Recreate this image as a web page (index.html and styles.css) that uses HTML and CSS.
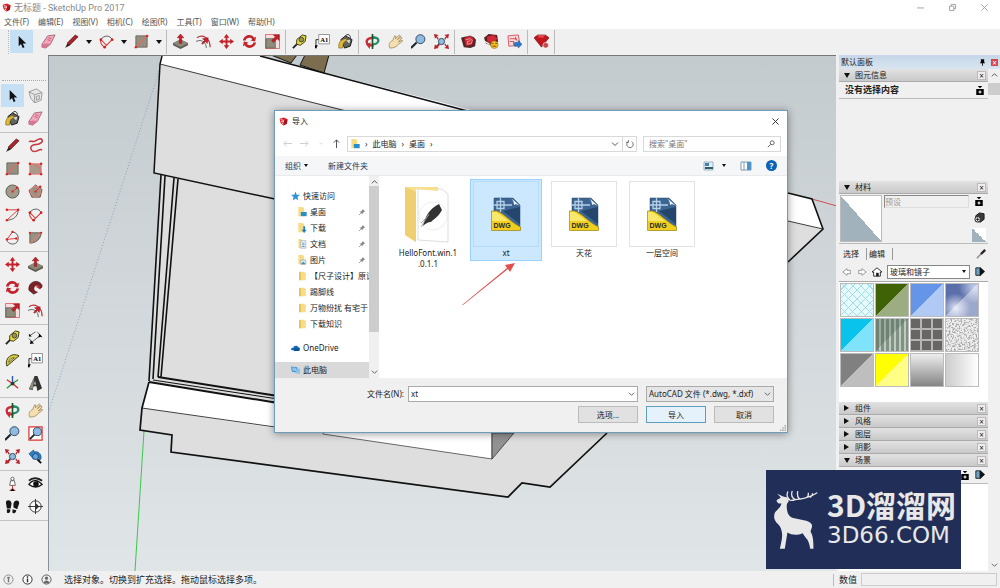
FILE: index.html
```html
<!DOCTYPE html>
<html lang="zh-Hans">
<head>
  <meta charset="UTF-8">
  <meta name="viewport" content="width=device-width, initial-scale=1.0">
  <title>无标题 - SketchUp Pro 2017</title>
  <link rel="stylesheet" href="styles.css">
</head>
<body>
  <!-- icon sprite -->
  <svg class="sprite" aria-hidden="true">
    <symbol id="i-app" viewBox="0 0 16 16"><path fill="#d8232a" d="M1 3l8-2 6 3-1 8-6 3-5-4z"/><path fill="#a3131b" d="M9 6l6-2-1 8-6 3z"/><path fill="none" stroke="#fff" stroke-width="1.3" d="M3 4.500l5 1.500v3L4 8M5 11l3 1.500"/></symbol>
    <symbol id="i-select" viewBox="0 0 16 16"><path fill="#111" d="M5 2v11l2.500-2.300L9.200 15l2-.9-1.800-4H13z"/></symbol>
    <symbol id="i-eraser" viewBox="0 0 16 16"><path fill="#f4a6bb" stroke="#8c5566" stroke-width=".8" d="M1 11L7 2l8-1-5 10-5 4-4-1z"/><path fill="#d97793" d="M1 11l5-1 4 1-5 4-4-1z"/><path stroke="#c43d62" stroke-width=".8" d="M8 4l3 1M7 6l3 1"/></symbol>
    <symbol id="i-pencil" viewBox="0 0 16 16"><path fill="#a8252b" stroke="#541012" stroke-width=".7" d="M12 1l3 2-9 9-3 1 1-4z"/><path fill="#222" d="M4 10l2 2-5 3z"/></symbol>
    <symbol id="i-arc" viewBox="0 0 16 16"><path fill="none" stroke="#555" d="M2 6C5 1 12 1 14 6"/><path fill="none" stroke="#d33" stroke-width="1.100" d="M2 6c-1 3 1 7 4 8l8-8M2 6l6 6"/><g fill="#c22"><circle cx="2" cy="6" r="1.400"/><circle cx="14" cy="6" r="1.400"/><circle cx="6" cy="14" r="1.400"/></g></symbol>
    <symbol id="i-rect" viewBox="0 0 16 16"><path fill="#948f7f" stroke="#6d6a5e" d="M2 2h12v12H2z"/><path stroke="#e66" stroke-width="1.200" d="M2 14L14 2"/><g fill="#d22"><circle cx="2" cy="14" r="1.300"/><circle cx="14" cy="2" r="1.300"/></g></symbol>
    <symbol id="i-rrect" viewBox="0 0 16 16"><path fill="#a8998a" stroke="#d77" d="M2 3h12v11H2z"/><path fill="none" stroke="#e66" d="M2 3c6 0 12 4 12 11"/><g fill="#d22"><circle cx="2" cy="3" r="1.300"/><circle cx="14" cy="3" r="1.300"/><circle cx="2" cy="14" r="1.300"/><circle cx="14" cy="14" r="1.300"/></g></symbol>
    <symbol id="i-circle" viewBox="0 0 16 16"><circle cx="8" cy="8" r="7" fill="#a09c8b" stroke="#5d5b50"/><path stroke="#d33" d="M8 8l5-4"/><g fill="#d22"><circle cx="8" cy="8" r="1.200"/><circle cx="13" cy="4" r="1.300"/></g></symbol>
    <symbol id="i-poly" viewBox="0 0 16 16"><path fill="#a09080" stroke="#6b5a50" d="M8 1l7 5-2 8H4L1 7z"/><circle cx="8" cy="8" r="5.500" fill="none" stroke="#d88"/><path stroke="#d33" d="M8 8l5-5"/><g fill="#d22"><circle cx="8" cy="8" r="1.200"/><circle cx="13" cy="3" r="1.300"/></g></symbol>
    <symbol id="i-free" viewBox="0 0 16 16"><path fill="none" stroke="#c3363e" stroke-width="1.600" d="M1 4c2-2 4 1 7-1s6-3 7-1-2 5-6 5-6 1-6 4 3 4 6 3 4-3 6-1"/></symbol>
    <symbol id="i-arc2" viewBox="0 0 16 16"><path fill="none" stroke="#d33" d="M1 3h13L2 14"/><path fill="none" stroke="#555" d="M14 3c0 7-5 11-12 11"/><g fill="#d22"><circle cx="2" cy="3" r="1.300"/><circle cx="14" cy="3" r="1.300"/><circle cx="2" cy="14" r="1.300"/></g></symbol>
    <symbol id="i-arc3" viewBox="0 0 16 16"><path fill="none" stroke="#555" d="M8 2c8 1 8 12 1 13-4 0-7-2-7-5"/><path fill="none" stroke="#d33" d="M8 2L2 10l10-1"/><g fill="#d22"><circle cx="8" cy="2" r="1.300"/><circle cx="2" cy="10" r="1.300"/><circle cx="12" cy="9" r="1.300"/></g></symbol>
    <symbol id="i-pie" viewBox="0 0 16 16"><path fill="#9a9382" stroke="#6d5b52" d="M2 3h12c0 6-5 11-12 11z"/><path fill="none" stroke="#e77" d="M2 14L14 3"/><g fill="#d22"><circle cx="2" cy="3" r="1.200"/><circle cx="14" cy="3" r="1.200"/></g></symbol>
    <symbol id="i-push" viewBox="0 0 16 16"><path fill="#8d8a79" stroke="#4c4b42" stroke-width=".6" d="M0 10l8-4 8 4-8 4z"/><path fill="#5c5a4e" d="M0 10l8 4 8-4v2l-8 4-8-4z"/><path fill="#c8202a" stroke="#7b1016" stroke-width=".5" d="M8 0l3.500 4H9.200v6H6.800V4H4.500z"/></symbol>
    <symbol id="i-offset" viewBox="0 0 16 16"><path fill="none" stroke="#c2303a" stroke-width="1.300" d="M1 4c6-4 14 0 14 10"/><path fill="none" stroke="#666" d="M0 8c6-3 11 1 11 7"/><path fill="#c8202a" stroke="#7b1016" stroke-width=".5" d="M6 10l3-3-2-2 6-1-1 6-2-2-3 3z"/></symbol>
    <symbol id="i-move" viewBox="0 0 16 16"><path fill="#c3222b" d="M8 0l3 4H9v3h3V5l4 3-4 3V9H9v3h2l-3 4-3-4h2V9H4v2L0 8l4-3v2h3V4H5z"/></symbol>
    <symbol id="i-rotate" viewBox="0 0 16 16"><path fill="#c3222b" d="M1 7c1-6 9-8 12-3l2-1-1 5-5-1 2-1.500C9 3 4 4 4 7zM15 9c-1 6-9 8-12 3l-2 1 1-5 5 1-2 1.500c2 2.500 7 1.500 7-1.500z"/></symbol>
    <symbol id="i-scale" viewBox="0 0 16 16"><path fill="#f7dede" stroke="#d33" stroke-width=".7" d="M.500.500h15v15H.500z"/><path fill="#8f8c7c" stroke="#55534a" stroke-width=".7" d="M1 5h10v10H1z"/><path fill="#c8202a" stroke="#7b1016" stroke-width=".5" d="M7 7l4-4-2-2h6v6l-2-2-4 4z"/></symbol>
    <symbol id="i-follow" viewBox="0 0 16 16"><path fill="#7d2226" stroke="#3c1113" stroke-width=".7" d="M1 11C0 4 6 0 11 2s5 6 2 7c0-3-4-5-6-2s0 5 3 6l-4 2z"/><path fill="#c8202a" d="M8 7l5-1v4z"/></symbol>
    <symbol id="i-tape" viewBox="0 0 16 16"><path stroke="#222" stroke-width="2" d="M1 15l5-5"/><path fill="#e3d742" stroke="#3b3a12" d="M5 6l6-5 4 1-1 6-5 4-4-1z"/><circle cx="10" cy="6" r="2.500" fill="#9c9740" stroke="#444"/></symbol>
    <symbol id="i-text" viewBox="0 0 16 16"><path fill="none" stroke="#222" d="M5 6H1v8"/><path d="M-1 12h4l-2 4z"/><path fill="#fff" stroke="#777" stroke-width=".8" d="M4 .500h11.500v10H4z"/><text x="5.500" y="8.500" class="svg-a1">A1</text></symbol>
    <symbol id="i-paint" viewBox="0 0 16 16"><path fill="#64645e" stroke="#111" d="M3 6l5-4 7 4-2 7-6 2z"/><path fill="none" stroke="#222" d="M8 2c2-3 6-1 5 3"/><path fill="#dfb934" stroke="#6b5613" stroke-width=".6" d="M1 15c-1-5 1-9 7-10l3 2c-5 0-6 4-6 8z"/><path fill="#ddd" d="M9 7l4-1-1 4z"/></symbol>
    <symbol id="i-orbit" viewBox="0 0 16 16"><path fill="none" stroke="#cc2a35" stroke-width="2.500" d="M9 12c-5 1-8-2-7-5s5-3 8-3"/><path fill="none" stroke="#288a6b" stroke-width="2.500" d="M7 4c5-1 8 1 7 4s-4 3-7 3"/><path stroke="#152" stroke-width="1.700" d="M8 0v16"/><path fill="#cc2a35" d="M6 9l-1 7-4-5z"/></symbol>
    <symbol id="i-hand" viewBox="0 0 16 16"><path fill="#f5dfb0" stroke="#8d7444" stroke-width=".7" d="M2 15c-2-4 0-7 3-8l2-5 1.500.500L8 5l4-4 1.300 1L10 6l4-3 1 1.200-4 4.300 4-2 .500 1.300L11 11c-2 3-5 4-9 4z"/></symbol>
    <symbol id="i-zoom" viewBox="0 0 16 16"><path stroke="#1c2430" stroke-width="2.200" d="M0 15l6-6"/><circle cx="10" cy="5.500" r="4.800" fill="#8fbbe0" stroke="#33465c"/></symbol>
    <symbol id="i-zoomwin" viewBox="0 0 16 16"><path fill="#fff" stroke="#d33" stroke-width="1.300" d="M1 1h14v14H1z"/><path stroke="#1c2430" stroke-width="2" d="M2 14l5-5"/><circle cx="10" cy="6" r="4.300" fill="#8fbbe0" stroke="#33465c"/></symbol>
    <symbol id="i-extents" viewBox="0 0 16 16"><path stroke="#223" stroke-width="1.500" d="M2 14l4-4"/><path fill="#b9202a" d="M0 0l5 1-2 1.500 2 2L4 6 2.500 3.500 1 5zM16 0l-5 1 2 1.500-2 2L12 6l1.500-2.500L15 5zM16 16l-5-1 2-1.500-2-2 1-1.500 1.500 2.500L15 11zM0 16l1-5 1.500 1.500L5 11l1 1-2 2 1 1z"/><circle cx="8" cy="8" r="3.300" fill="#8fbbe0" stroke="#33465c"/></symbol>
    <symbol id="i-prev" viewBox="0 0 16 16"><path fill="#2f7fc0" stroke="#174a7c" stroke-width=".7" d="M1 5l5-4v2c5-1 8 2 8 6 0 2-1 3-2 3 0-3-2-5-6-4v3z"/><circle cx="8" cy="8" r="3.200" fill="#5fa4d8" stroke="#174a7c"/><path stroke="#111" stroke-width="2" d="M10 11l4 4"/></symbol>
    <symbol id="i-dims" viewBox="0 0 16 16"><path fill="none" stroke="#333" stroke-width=".8" d="M4 13L13 6M1 9l5 6M10 2l5 6M2 6l6-4"/><path d="M3 11l3 3-4 1zM12 4l3 3-4 1zM1 4l3 3H1z"/></symbol>
    <symbol id="i-protractor" viewBox="0 0 16 16"><path fill="#d8c943" stroke="#3b3a12" d="M2 14C-1 5 8-1 15 3z"/><path fill="#f2f2f2" stroke="#3b3a12" stroke-width=".7" d="M4 10c0-3 3-5 6-5z"/></symbol>
    <symbol id="i-axes" viewBox="0 0 16 16"><path stroke="#2a5cc4" stroke-width="1.500" d="M8 0v8"/><path stroke="#c33" stroke-width="1.500" d="M8 8l-6-4M8 8l6 5"/><path stroke="#2a9a3c" stroke-width="1.500" d="M8 8l6-4M8 8l-6 5"/><circle cx="8" cy="8" r="2" fill="#334"/></symbol>
    <symbol id="i-3dtext" viewBox="0 0 16 16"><path fill="#333" d="M7 0l3 0 5 13-5 3-1-5H6l-1 4-4-1z"/><path fill="#8d8a79" d="M7 1L5 14l-4-1z"/><path fill="#ddd" d="M7.500 5l1 4h-2z"/></symbol>
    <symbol id="i-position" viewBox="0 0 16 16"><circle cx="8" cy="3" r="1.700" fill="#fff" stroke="#444" stroke-width=".8"/><path fill="#fff" stroke="#444" stroke-width=".8" d="M6 5h4l1 5H5z"/><path stroke="#c33" stroke-width="1" d="M8 10v3M5 16l3-3 3 3"/></symbol>
    <symbol id="i-eye" viewBox="0 0 16 16"><path fill="#fff" stroke="#111" stroke-width="1.400" d="M1 9c4-6 10-5 14 0-5 4-10 3-14 0z"/><circle cx="8.500" cy="8.500" r="3" fill="#111"/><path fill="none" stroke="#222" stroke-width="2" d="M1 5c4-4 10-3 14 0"/></symbol>
    <symbol id="i-walk" viewBox="0 0 16 16"><path fill="#161616" d="M1 4c0-4 6-3 6 1L6 10l-4 0zM2 11l3.500 0c1 4-3 5-3.500 3zM9 5c1-5 7-4 6 0l-2 6-4-2zM8 11l4 1c0 4-5 4-4 1z"/></symbol>
    <symbol id="i-section" viewBox="0 0 16 16"><circle cx="8" cy="8" r="6" fill="#fff" stroke="#333"/><path stroke="#333" d="M0 8h16M8 0v16"/><path fill="#333" d="M8 4l4 4-4 4z"/></symbol>
    <symbol id="i-component" viewBox="0 0 16 16"><path fill="#e6e6e6" stroke="#9a9a9a" d="M1 4l8-3 6 4-1 8-7 3-4-5z"/><path fill="none" stroke="#9a9a9a" d="M1 4l6 3 8-2M7 7v9M9 9l3-1v4l-3 1z"/></symbol>
    <symbol id="i-wh" viewBox="0 0 16 16"><path fill="#4a2a2a" d="M0 4l4-1 9 0 3 3-1 7-5 2-7-1z"/><path fill="#cf2a35" stroke="#66161b" stroke-width=".7" d="M3 4l7-2 4 3-2 7-7 1z"/><path fill="none" stroke="#f3b2b6" stroke-width=".8" d="M5 6l5-1 2 2-1 3-4 1V8l3-1"/></symbol>
    <symbol id="i-share" viewBox="0 0 16 16"><path fill="#5a2022" d="M0 4l5-4 9 1 1 7-6 5-7-3z"/><path fill="#cf2a35" d="M3 3l8-2 3 4-3 4-7 0z"/><path fill="none" stroke="#eee" stroke-width="1.500" d="M1 8l5 3"/><circle cx="11" cy="11.500" r="4" fill="#f0bd2c" stroke="#a2720d" stroke-width=".6"/><path stroke="#7b5100" d="M8 10h2M12 10h2M9 13h4"/></symbol>
    <symbol id="i-layout" viewBox="0 0 16 16"><path fill="#f8dadd" stroke="#d65562" d="M1 2l11-1 2 11-12 1z"/><path fill="none" stroke="#d65562" stroke-width="1.100" d="M3 5h7v2M3 8h4v4M9 3v3"/><path fill="#2b79c8" stroke="#17477b" stroke-width=".5" d="M8 9h4V7l4 4-4 4v-2H8z"/></symbol>
    <symbol id="i-ruby" viewBox="0 0 16 16"><path fill="#c2151f" stroke="#620a10" stroke-width=".6" d="M0 4l4-3h8l4 3-8 10z"/><path fill="#e2444b" d="M4 1h8l-2 3H5z"/><circle cx="12.500" cy="12" r="3" fill="#c44a52" stroke="#fff" stroke-width=".6"/></symbol>
    <symbol id="i-plusbox" viewBox="0 0 10 12"><path d="M2 0h6L5 3zM0 4h10v8H0z"/><path stroke="#fff" stroke-width="1.500" d="M5 6v4M3 8h4"/></symbol>
    <symbol id="i-newmat" viewBox="0 0 12 12"><path fill="#3b3b36" stroke="#111" d="M2 4l4-3 5 1v6l-4 3-5-1z"/><circle cx="4" cy="8" r="3" fill="#fff" stroke="#111"/><path stroke="#111" d="M4 6v4M2 8h4"/></symbol>
    <symbol id="i-detail" viewBox="0 0 12 12"><path fill="#6fa3c6" stroke="#111" d="M1 1h5v9H1z"/><path fill="#111" d="M6 0l6 5.500L6 11z"/></symbol>
    <symbol id="i-dropper" viewBox="0 0 12 12"><path stroke="#888" stroke-width="1.600" d="M1 11l6-6"/><path stroke="#2b211d" stroke-width="2.800" d="M6 6l5-5"/></symbol>
    <symbol id="i-back" viewBox="0 0 12 12"><path fill="#fff" stroke="#8a8a8a" d="M1 6l5-4v2h4v4H6v2z"/></symbol>
    <symbol id="i-home" viewBox="0 0 12 12"><path fill="#fff" stroke="#111" d="M0 6l6-5 6 5H10v5H2V6z"/><path fill="#111" d="M5 7h3v4H5z"/></symbol>
    <symbol id="i-down" viewBox="0 0 8 8"><path fill="none" stroke="#555" d="M1 2.500l3 3 3-3"/></symbol>
    <symbol id="i-up" viewBox="0 0 8 8"><path fill="none" stroke="#444" d="M1 5.500l3-3 3 3"/></symbol>
    <symbol id="i-close" viewBox="0 0 8 8"><path stroke="currentColor" d="M.500.500l7 7M7.500.500l-7 7"/></symbol>
    <symbol id="i-folder" viewBox="0 0 10 12"><path fill="#f7dc86" d="M1 1h5l3 1v9H1z"/><path fill="#e7bd55" d="M1 1l2 1v9H1z"/></symbol>
    <symbol id="i-desktop" viewBox="0 0 10 12"><path fill="#f7dc86" d="M0 0h4l3 1v10H0z"/><path fill="#2a8dcc" d="M3 6h7v5H3z"/></symbol>
    <symbol id="i-download" viewBox="0 0 10 12"><path fill="#f7dc86" d="M0 0h4l3 1v10H0z"/><path fill="#1d7dc4" d="M6 4h2v4h2l-3 4-3-4h2z"/></symbol>
    <symbol id="i-doc" viewBox="0 0 10 12"><path fill="#f7dc86" d="M0 0h4v11H0z"/><path fill="#f4f8fb" stroke="#8ea6b8" stroke-width=".8" d="M3 2h6v9H3z"/><path stroke="#4a88b8" d="M4.500 5h3M4.500 7h3M4.500 9h3"/></symbol>
    <symbol id="i-pic" viewBox="0 0 10 12"><path fill="#f7dc86" d="M0 0h4l3 1v10H0z"/><path fill="#dcebf5" stroke="#8ea6b8" stroke-width=".8" d="M3 6h6v5H3z"/><path fill="#4a8c9c" d="M3 11l3-3 3 3z"/></symbol>
    <symbol id="i-pin" viewBox="0 0 8 8"><path fill="#888" d="M5 0l3 3-1 .500-2 2L4.500 7 1 3.500 3 3l2-2z"/><path stroke="#888" d="M0 8l3-3"/></symbol>
    <symbol id="i-star" viewBox="0 0 10 10"><path fill="#2e93d9" d="M5 0l1.300 3.500L10 3.700 7.200 6l1 4L5 7.700 2 10l.800-4L0 3.700l3.700-.2z"/></symbol>
    <symbol id="i-cloud" viewBox="0 0 12 10"><path fill="#1468b8" d="M0 7c0-2 2-3 3-2 0-4 6-4 7-1 3 1 2 4 1 4H1z"/><path fill="#0b4f95" d="M4 9c-1-3 2-4 3-3 3-1 5 1 4 3z"/></symbol>
    <symbol id="i-pc" viewBox="0 0 10 10"><path fill="#3f95d0" d="M0 1l7 1v6L1 7z"/><path fill="#8cc3e8" d="M1 2l5 .700V6.500L2 6zM7 3l3 .500v6L5 8.500z"/></symbol>
    <symbol id="i-dwg" viewBox="0 0 30 34"><path fill="#3d6593" stroke="#274464" stroke-width=".5" d="M3 1h19l7 7v25H3z"/><path fill="#24466c" d="M12 14l17-4v17z"/><path fill="#f4f7fa" d="M20 1l9 8c-3-2-5-2-6-1 0-3-1-5-3-7z"/><path fill="none" stroke="#b5d0e6" stroke-width="1.300" d="M6 4.500h7v7H6zM9.500 1v14M3 8h18"/><path fill="#f0cf1e" stroke="#a4871a" stroke-width=".7" d="M.500 14h5c7 2 14 11 24 16v3.500H.500z"/><path fill="#fae86c" d="M1 15h4c6 3 8 6 13 9H1z"/><text x="2.500" y="31" class="svg-dwg">DWG</text></symbol>
  </svg>

  <div class="app">
    <header class="titlebar">
      <svg class="app-icon"><use href="#i-app"/></svg>
      <h1>无标题 - SketchUp Pro 2017</h1>
      <div class="win-controls">
        <button type="button" aria-label="最小化"><svg viewBox="0 0 8 8"><path stroke="#999" d="M0 4.500h8"/></svg></button>
        <button type="button" aria-label="还原"><svg viewBox="0 0 8 8"><path fill="none" stroke="#999" d="M.500 2.500h5v5h-5zM2.500 2.500v-2h5v5h-2"/></svg></button>
        <button type="button" aria-label="关闭"><svg><use href="#i-close"/></svg></button>
      </div>
    </header>

    <nav class="menubar">
      <a href="#">文件(F)</a>
      <a href="#">编辑(E)</a>
      <a href="#">视图(V)</a>
      <a href="#">相机(C)</a>
      <a href="#">绘图(R)</a>
      <a href="#">工具(T)</a>
      <a href="#">窗口(W)</a>
      <a href="#">帮助(H)</a>
    </nav>

    <div class="toolbar">
      <div class="tool-group first">
        <button type="button" class="tool active" aria-label="选择"><svg><use href="#i-select"/></svg></button>
        <button type="button" class="tool" aria-label="橡皮擦"><svg><use href="#i-eraser"/></svg></button>
        <button type="button" class="tool" aria-label="直线"><svg><use href="#i-pencil"/></svg></button>
        <button type="button" class="caret" aria-label="更多直线"></button>
        <button type="button" class="tool" aria-label="圆弧"><svg><use href="#i-arc"/></svg></button>
        <button type="button" class="caret" aria-label="更多圆弧"></button>
        <button type="button" class="tool" aria-label="矩形"><svg><use href="#i-rect"/></svg></button>
        <button type="button" class="caret" aria-label="更多形状"></button>
      </div>
      <div class="tool-group">
        <button type="button" class="tool" aria-label="推拉"><svg><use href="#i-push"/></svg></button>
        <button type="button" class="tool" aria-label="偏移"><svg><use href="#i-offset"/></svg></button>
        <button type="button" class="tool" aria-label="移动"><svg><use href="#i-move"/></svg></button>
        <button type="button" class="tool" aria-label="旋转"><svg><use href="#i-rotate"/></svg></button>
        <button type="button" class="tool" aria-label="缩放"><svg><use href="#i-scale"/></svg></button>
      </div>
      <div class="tool-group">
        <button type="button" class="tool" aria-label="卷尺"><svg><use href="#i-tape"/></svg></button>
        <button type="button" class="tool" aria-label="文字"><svg><use href="#i-text"/></svg></button>
        <button type="button" class="tool" aria-label="材质"><svg><use href="#i-paint"/></svg></button>
      </div>
      <div class="tool-group">
        <button type="button" class="tool" aria-label="环绕观察"><svg><use href="#i-orbit"/></svg></button>
        <button type="button" class="tool" aria-label="平移"><svg><use href="#i-hand"/></svg></button>
        <button type="button" class="tool" aria-label="缩放视图"><svg><use href="#i-zoom"/></svg></button>
        <button type="button" class="tool" aria-label="充满视窗"><svg><use href="#i-extents"/></svg></button>
      </div>
      <div class="tool-group">
        <button type="button" class="tool" aria-label="3D Warehouse"><svg><use href="#i-wh"/></svg></button>
        <button type="button" class="tool" aria-label="分享模型"><svg><use href="#i-share"/></svg></button>
        <button type="button" class="tool" aria-label="LayOut"><svg><use href="#i-layout"/></svg></button>
      </div>
      <div class="tool-group">
        <button type="button" class="tool" aria-label="扩展程序"><svg><use href="#i-ruby"/></svg></button>
      </div>
    </div>

    <main class="workspace">
      <aside class="side-tools">
        <div class="side-group">
          <button type="button" class="tool active" aria-label="选择"><svg><use href="#i-select"/></svg></button>
          <button type="button" class="tool" aria-label="组件"><svg><use href="#i-component"/></svg></button>
          <button type="button" class="tool" aria-label="材质"><svg><use href="#i-paint"/></svg></button>
          <button type="button" class="tool" aria-label="擦除"><svg><use href="#i-eraser"/></svg></button>
        </div>
        <div class="side-group">
          <button type="button" class="tool" aria-label="直线"><svg><use href="#i-pencil"/></svg></button>
          <button type="button" class="tool" aria-label="手绘线"><svg><use href="#i-free"/></svg></button>
          <button type="button" class="tool" aria-label="矩形"><svg><use href="#i-rect"/></svg></button>
          <button type="button" class="tool" aria-label="旋转矩形"><svg><use href="#i-rrect"/></svg></button>
          <button type="button" class="tool" aria-label="圆"><svg><use href="#i-circle"/></svg></button>
          <button type="button" class="tool" aria-label="多边形"><svg><use href="#i-poly"/></svg></button>
          <button type="button" class="tool" aria-label="圆弧"><svg><use href="#i-arc2"/></svg></button>
          <button type="button" class="tool" aria-label="两点圆弧"><svg><use href="#i-arc"/></svg></button>
          <button type="button" class="tool" aria-label="三点圆弧"><svg><use href="#i-arc3"/></svg></button>
          <button type="button" class="tool" aria-label="扇形"><svg><use href="#i-pie"/></svg></button>
        </div>
        <div class="side-group">
          <button type="button" class="tool" aria-label="移动"><svg><use href="#i-move"/></svg></button>
          <button type="button" class="tool" aria-label="推拉"><svg><use href="#i-push"/></svg></button>
          <button type="button" class="tool" aria-label="旋转"><svg><use href="#i-rotate"/></svg></button>
          <button type="button" class="tool" aria-label="路径跟随"><svg><use href="#i-follow"/></svg></button>
          <button type="button" class="tool" aria-label="缩放"><svg><use href="#i-scale"/></svg></button>
          <button type="button" class="tool" aria-label="偏移"><svg><use href="#i-offset"/></svg></button>
        </div>
        <div class="side-group">
          <button type="button" class="tool" aria-label="卷尺"><svg><use href="#i-tape"/></svg></button>
          <button type="button" class="tool" aria-label="尺寸"><svg><use href="#i-dims"/></svg></button>
          <button type="button" class="tool" aria-label="量角器"><svg><use href="#i-protractor"/></svg></button>
          <button type="button" class="tool" aria-label="文字"><svg><use href="#i-text"/></svg></button>
          <button type="button" class="tool" aria-label="轴"><svg><use href="#i-axes"/></svg></button>
          <button type="button" class="tool" aria-label="三维文字"><svg><use href="#i-3dtext"/></svg></button>
        </div>
        <div class="side-group">
          <button type="button" class="tool" aria-label="环绕观察"><svg><use href="#i-orbit"/></svg></button>
          <button type="button" class="tool" aria-label="平移"><svg><use href="#i-hand"/></svg></button>
          <button type="button" class="tool" aria-label="缩放视图"><svg><use href="#i-zoom"/></svg></button>
          <button type="button" class="tool" aria-label="缩放窗口"><svg><use href="#i-zoomwin"/></svg></button>
          <button type="button" class="tool" aria-label="充满视窗"><svg><use href="#i-extents"/></svg></button>
          <button type="button" class="tool" aria-label="上一个"><svg><use href="#i-prev"/></svg></button>
        </div>
        <div class="side-group">
          <button type="button" class="tool" aria-label="定位相机"><svg><use href="#i-position"/></svg></button>
          <button type="button" class="tool" aria-label="绕轴旋转"><svg><use href="#i-eye"/></svg></button>
          <button type="button" class="tool" aria-label="漫游"><svg><use href="#i-walk"/></svg></button>
          <button type="button" class="tool" aria-label="剖切面"><svg><use href="#i-section"/></svg></button>
        </div>
      </aside>

      <section class="viewport">
        <svg class="scene" viewBox="48 55 788 515" preserveAspectRatio="xMinYMin slice">
          <path fill="none" stroke="#7f8fc0" stroke-width=".8" stroke-dasharray="1 2" d="M159 67L48 410"/>
          <path stroke="#3fc552" d="M143 430l-9 140"/>
          <path stroke="#d05050" d="M811 198l25 7"/>
          <!-- model body -->
          <path fill="#dedede" d="M159 63l328 57 300 72 24 6 11 30-35 33-182 172-56 53-28-4-14 14-337-45 1-17-32-5 2-22 7-26 12-206-7-3z"/>
          <path fill="#fff" d="M160 55h99l215 55 337 88 11 30-35-8-438-110L159 63z"/>
          <path fill="#7c6d51" stroke="#111" d="M270 54l20 8 6-8zM304 54l-5 10 24 8 5-18z"/>
          <path fill="none" stroke="#111" stroke-width="1.600" d="M259 55l75 20 140 37M787 192l24 6 11 30-35 33"/>
          <path fill="none" stroke="#111" stroke-width=".8" d="M159 63l190 48M787 220l35 8"/>
          <path fill="none" stroke="#111" stroke-width="1.500" d="M161 55l-2 8-6 109 121 26"/>
          <path fill="none" stroke="#111" stroke-width="1.600" d="M160 174l-12 206M164 175l-12 203M173 177l-16 199M177 178l-17 198"/>
          <path fill="#fff" d="M148 381l126 20v26l-133-20z"/>
          <path fill="none" stroke="#111" stroke-width="2" d="M157 376l120 19M148 381l129 21"/>
          <path fill="none" stroke="#111" stroke-width="1" d="M152 379l125 19"/>
          <path fill="none" stroke="#111" stroke-width=".8" d="M141 407l133 19"/>
          <path fill="#fff" stroke="#444" stroke-width=".8" d="M322 433l169 25v-28H322z"/>
          <path fill="#929292" stroke="#333" stroke-width=".8" d="M491 458v-26h22z"/>
          <path fill="none" stroke="#111" stroke-width="1.700" d="M148 381l-7 26-2 22 32 5-1 17 337 45 14-14 28 4 57-54"/>
        </svg>
      </section>

      <form class="dialog" aria-label="导入">
        <div class="dialog-title">
          <svg class="app-icon"><use href="#i-app"/></svg>
          <h2>导入</h2>
          <button type="button" aria-label="关闭"><svg><use href="#i-close"/></svg></button>
        </div>
        <div class="dialog-nav">
          <div class="history">
            <svg viewBox="0 0 10 10"><path fill="none" stroke="#ccc" d="M10 5H1M4 2L1 5l3 3"/></svg>
            <svg viewBox="0 0 10 10"><path fill="none" stroke="#ccc" d="M0 5h9M6 2l3 3-3 3"/></svg>
            <svg class="small" viewBox="0 0 8 8"><path fill="none" stroke="#ccc" d="M2 3l2 2 2-2"/></svg>
            <svg viewBox="0 0 10 10"><path fill="none" stroke="#444" d="M5 10V1M2 4l3-3 3 3"/></svg>
          </div>
          <div class="address">
            <svg class="file-icon"><use href="#i-desktop"/></svg>
            <span class="chev">›</span><a href="#">此电脑</a>
            <span class="chev">›</span><a href="#">桌面</a>
            <span class="chev">›</span>
            <svg class="addr-down"><use href="#i-down"/></svg>
            <button type="button" aria-label="刷新"><svg viewBox="0 0 10 10"><path fill="none" stroke="#555" d="M3 2a4 4 0 1 0 4 0M3 0v3h-3"/></svg></button>
          </div>
          <div class="search">
            <input type="text" placeholder='搜索"桌面"' aria-label="搜索">
            <svg viewBox="0 0 10 10"><circle cx="6.500" cy="3.500" r="2.500" fill="none" stroke="#444"/><path stroke="#444" d="M4.500 5.500L1 9"/></svg>
          </div>
        </div>
        <div class="dialog-tools">
          <button type="button">组织<i class="tri"></i></button>
          <button type="button">新建文件夹</button>
          <div class="view-tools">
            <button type="button" aria-label="视图"><svg viewBox="0 0 12 10"><path fill="#e4eef5" stroke="#9db2c3" d="M1 1h9v8H1z"/><path fill="#3d83b5" d="M2 2h4v3H2z"/><path fill="#2c5e68" d="M2 6h8v2H2z"/></svg><i class="tri"></i></button>
            <button type="button" aria-label="预览窗格"><svg viewBox="0 0 12 10"><path fill="#fff" stroke="#7d9bb3" d="M1 1h10v8H1z"/><path fill="#4d94c8" d="M7 1h4v8H7z"/><path stroke="#7d9bb3" d="M4 1v8"/></svg></button>
            <button type="button" class="help" aria-label="帮助">?</button>
          </div>
        </div>
        <div class="dialog-body">
          <ul class="places">
            <li class="root"><svg><use href="#i-star"/></svg><a href="#">快速访问</a></li>
            <li><svg><use href="#i-desktop"/></svg><a href="#">桌面</a><svg class="pin"><use href="#i-pin"/></svg></li>
            <li><svg><use href="#i-download"/></svg><a href="#">下载</a><svg class="pin"><use href="#i-pin"/></svg></li>
            <li><svg><use href="#i-doc"/></svg><a href="#">文档</a><svg class="pin"><use href="#i-pin"/></svg></li>
            <li><svg><use href="#i-pic"/></svg><a href="#">图片</a><svg class="pin"><use href="#i-pin"/></svg></li>
            <li><svg><use href="#i-folder"/></svg><a href="#">【尺子设计】原设</a></li>
            <li><svg><use href="#i-folder"/></svg><a href="#">踢脚线</a></li>
            <li><svg><use href="#i-folder"/></svg><a href="#">万物纷扰 有宅于</a></li>
            <li><svg><use href="#i-folder"/></svg><a href="#">下载知识</a></li>
            <li class="root spaced"><svg><use href="#i-cloud"/></svg><a href="#">OneDrive</a></li>
            <li class="root spaced current"><svg><use href="#i-pc"/></svg><a href="#">此电脑</a></li>
          </ul>
          <div class="scrollbar">
            <svg><use href="#i-up"/></svg>
            <div class="thumb"></div>
            <svg><use href="#i-down"/></svg>
          </div>
          <div class="files">
            <div class="file">
              <div class="preview plain">
                <svg viewBox="0 0 64 64"><path fill="#fff" stroke="#ddd" d="M22 7h24l6 5v48l-30-2z"/><path fill="#f8df8e" d="M9 5h33v4L20 7v53L9 53z"/><path fill="#efcf70" d="M9 5l11 5v50L9 53z"/><circle cx="37" cy="34" r="14" fill="#fff" stroke="#eee"/><path fill="#333" d="M27 44c2-9 6-17 16-22l3 6c-3 6-8 9-11 12-3 0-6 2-8 4z"/><path fill="none" stroke="#999" stroke-width=".8" d="M25 45l8-13M25 41l8-8"/></svg>
              </div>
              <span>HelloFont.win.1<br>.0.1.1</span>
            </div>
            <div class="file selected">
              <div class="preview"><svg class="dwg"><use href="#i-dwg"/></svg></div>
              <span>xt</span>
            </div>
            <div class="file">
              <div class="preview"><svg class="dwg"><use href="#i-dwg"/></svg></div>
              <span>天花</span>
            </div>
            <div class="file">
              <div class="preview"><svg class="dwg"><use href="#i-dwg"/></svg></div>
              <span>一层空间</span>
            </div>
            <svg class="pointer" viewBox="0 0 56 44"><path fill="#e05050" d="M1 43L46 6l-2-3 10-2-5 9-2-3L2 43z"/></svg>
          </div>
        </div>
        <div class="dialog-footer">
          <div class="field-row">
            <label for="filename">文件名(N):</label>
            <div class="combo filename">
              <input type="text" id="filename" value="xt">
              <svg><use href="#i-down"/></svg>
            </div>
            <div class="combo filetype">
              <select aria-label="文件类型"><option>AutoCAD 文件 (*.dwg, *.dxf)</option></select>
              <svg><use href="#i-down"/></svg>
            </div>
          </div>
          <div class="button-row">
            <button type="button">选项...</button>
            <button type="submit" class="primary">导入</button>
            <button type="button">取消</button>
          </div>
          <svg class="grip" viewBox="0 0 8 8"><path fill="#aaa" d="M6 0h2v2H6zM3 3h2v2H3zM6 3h2v2H6zM0 6h2v2H0zM3 6h2v2H3zM6 6h2v2H6z"/></svg>
        </div>
      </form>

      <aside class="tray">
        <div class="tray-title">
          <h2>默认面板</h2>
          <svg viewBox="0 0 6 8"><path d="M1 0h4v4h1v1H3.500v3h-1V5H0V4h1z"/></svg>
          <button type="button" aria-label="关闭面板">×</button>
        </div>
        <div class="tray-body">
          <div class="panels">
            <h3 class="panel-head open">图元信息<button type="button" aria-label="关闭">×</button></h3>
            <div class="entity">
              <div class="entity-row">
                <strong>没有选择内容</strong>
                <svg class="plusbox"><use href="#i-plusbox"/></svg>
              </div>
            </div>
            <h3 class="panel-head open">材料<button type="button" aria-label="关闭">×</button></h3>
            <div class="material">
              <div class="mat-preview"></div>
              <input type="text" value="预设" aria-label="材料名称">
              <div class="mat-side">
                <svg class="plusbox"><use href="#i-plusbox"/></svg>
                <svg><use href="#i-newmat"/></svg>
                <div class="mat-default"></div>
              </div>
            </div>
            <div class="mat-tabs">
              <a href="#">选择</a>
              <a href="#">编辑</a>
              <svg><use href="#i-dropper"/></svg>
            </div>
            <div class="mat-nav">
              <svg><use href="#i-back"/></svg>
              <svg class="flip"><use href="#i-back"/></svg>
              <svg><use href="#i-home"/></svg>
              <div class="library">
                <select aria-label="材料库"><option>玻璃和镜子</option></select>
                <i class="tri"></i>
              </div>
              <svg><use href="#i-detail"/></svg>
            </div>
            <div class="swatches">
              <div class="swatch grid-glass"></div>
              <div class="swatch green"></div>
              <div class="swatch blue"></div>
              <div class="swatch sky"></div>
              <div class="swatch cyan"></div>
              <div class="swatch ribbed"></div>
              <div class="swatch block"></div>
              <div class="swatch speckle"><svg viewBox="0 0 32 32"><filter id="noise"><feTurbulence type="fractalNoise" baseFrequency=".6" numOctaves="2" seed="4"/><feColorMatrix values="0 0 0 0 .4 0 0 0 0 .4 0 0 0 0 .4 5 0 0 0 -2.300"/></filter><rect width="32" height="32" filter="url(#noise)"/></svg></div>
              <div class="swatch grey"></div>
              <div class="swatch yellow"></div>
              <div class="swatch mirror-a"></div>
              <div class="swatch mirror-b"></div>
            </div>
            <h3 class="panel-head">组件<button type="button" aria-label="关闭">×</button></h3>
            <h3 class="panel-head">风格<button type="button" aria-label="关闭">×</button></h3>
            <h3 class="panel-head">图层<button type="button" aria-label="关闭">×</button></h3>
            <h3 class="panel-head">阴影<button type="button" aria-label="关闭">×</button></h3>
            <h3 class="panel-head open">场景<button type="button" aria-label="关闭">×</button></h3>
            <div class="scene-tools">
              <svg class="plusbox"><use href="#i-plusbox"/></svg>
              <svg><use href="#i-detail"/></svg>
            </div>
            <div class="scene-list"></div>
          </div>
          <div class="scrollbar tray-scroll">
            <svg><use href="#i-up"/></svg>
            <div class="thumb"></div>
            <svg><use href="#i-down"/></svg>
          </div>
        </div>
      </aside>

      <div class="brand">
        <svg viewBox="36 68 138 182">
          <path fill="#e8e8e8" d="M46 99l13-8-11-12 18 9 12 3 5 12c-5 4-7 10-6 18 1 16 5 29 23 33l36 7c14 4 20 11 17 21l-4 12c8 13 9 31 9 52h-10c-2-14-5-25-14-34l-9-13c-17 7-32 6-46-2l-8 49H56c4-16 7-29 7-42-1-19-7-29-17-37-9-10-9-24-4-32 8-9 16-14 19-26-9 1-14-2-15-10z"/>
          <path fill="none" stroke="#e8e8e8" stroke-width="4" stroke-linecap="round" d="M74 92c6 8 17 9 29 5 28-2 43-6 65-20M85 97c-8-8-9-15-5-23M103 97c-12-6-13-15-10-25M118 96c-10-5-10-12-8-23M132 93c9-3 12-8 10-15M148 90c5-2 7-6 7-11"/>
        </svg>
        <div class="brand-text">
          <span class="brand-cn">3D溜溜网</span>
          <span class="brand-en">3D66.COM</span>
        </div>
      </div>
    </main>

    <footer class="statusbar">
      <svg viewBox="0 0 12 12"><circle cx="6" cy="6" r="5" fill="#eee" stroke="#888"/><path stroke="#777" stroke-width="1.500" d="M6 3v6M4.500 4h3"/></svg>
      <svg viewBox="0 0 12 12"><circle cx="6" cy="6" r="5" fill="#fff" stroke="#222"/><path stroke="#222" stroke-width="1.500" d="M6 5v4M6 2.500v1.500"/></svg>
      <svg viewBox="0 0 12 12"><circle cx="6" cy="6" r="5" fill="#eee" stroke="#555"/><circle cx="6" cy="4.500" r="1.700" fill="#666"/><path fill="#666" d="M3 10c0-4 6-4 6 0z"/></svg>
      <p>选择对象。切换到扩充选择。拖动鼠标选择多项。</p>
      <label for="measure">数值</label>
      <input type="text" id="measure">
    </footer>
  </div>
</body>
</html>
```

FILE: styles.css
```css
* {
  box-sizing: border-box;
}
body {
  margin: 0;
  background: #f0f0f0;
  color: #222;
  font-family: "Noto Sans", "Noto Sans CJK SC", sans-serif;
  font-size: 8px;
  line-height: 12px;
}
h1, h2, h3, p, ul {
  margin: 0;
  padding: 0;
  font-size: inherit;
  font-weight: normal;
}
ul {
  list-style: none;
}
a {
  color: inherit;
  text-decoration: none;
}
button, input, select {
  margin: 0;
  padding: 0;
  border: 0;
  background: none;
  color: inherit;
  font: inherit;
  border-radius: 0;
}
select {
  appearance: none;
}
svg {
  flex: none;
  overflow: visible;
}
.sprite {
  position: absolute;
  width: 0;
  height: 0;
}
.svg-a1 {
  font: bold 7px "Liberation Serif", serif;
}
.svg-dwg {
  fill: #2b2b2b;
  font: bold 7px "Liberation Sans", sans-serif;
}
.app {
  display: flex;
  flex-direction: column;
  min-height: 100vh;
}
.app-icon {
  width: 9px;
  height: 9px;
}

/* window header */
.titlebar {
  display: flex;
  align-items: center;
  gap: 3px;
  height: 15px;
  padding-left: 2px;
  background: #fff;
  color: #888;
}
.titlebar h1 {
  font-family: Roboto, "Noto Sans CJK SC", sans-serif;
  font-size: 9px;
}
.win-controls {
  display: flex;
  margin-left: auto;
  color: #999;
}
.win-controls button {
  display: flex;
  justify-content: center;
  width: 32px;
}
.win-controls svg {
  width: 7px;
  height: 7px;
}
.menubar {
  display: flex;
  gap: 9px;
  height: 14px;
  padding: 1px 4px;
  background: #fff;
  color: #555;
}

/* toolbars */
.toolbar {
  display: flex;
  height: 26px;
  padding: 1px 0;
}
.tool-group {
  display: flex;
  padding-right: 1px;
  margin-right: 2px;
  border-right: 1px solid #bbb;
}
.tool-group.first {
  padding-left: 1px;
  margin-left: 8px;
  border-left: 1px dotted #bbb;
}
.tool {
  display: flex;
  align-items: center;
  justify-content: center;
  width: 23px;
  height: 23px;
}
.tool svg {
  width: 15px;
  height: 15px;
}
.tool.active {
  background: #c5dff5;
}
.first .active {
  margin-right: 4px;
}
.caret {
  display: flex;
  align-items: center;
  justify-content: center;
  width: 12px;
}
.caret::after, .tri {
  content: "";
  border: 3px solid transparent;
  border-top: 4px solid #111;
  border-bottom: 0;
}
.workspace {
  position: relative;
  display: flex;
  flex: 1;
}
.side-tools {
  width: 48px;
  padding-top: 25px;
}
.side-tools::before {
  content: "";
  display: block;
  margin: 0 2px 3px;
  border-top: 1px dotted #aaa;
}
.side-group {
  display: grid;
  grid-template-columns: 23px 23px;
  margin-bottom: 1px;
  padding: 0 1px 2px;
  border-bottom: 1px solid #c4c4c4;
}
.viewport {
  position: relative;
  flex: 1;
  overflow: hidden;
  border-top: 1px solid #777;
  border-left: 1px solid #87919b;
  background: linear-gradient(#c4cbcf, #e0e5e7);
}
.scene {
  position: absolute;
  inset: 0;
  width: 100%;
  height: 100%;
}

/* import dialog */
.dialog {
  position: absolute;
  left: 274px;
  top: 55px;
  width: 514px;
  border: 1px solid #6f9cba;
  background: #fff;
  box-shadow: 0 1px 8px rgba(0, 0, 0, 0.4);
}
.dialog-title {
  display: flex;
  align-items: center;
  gap: 4px;
  height: 20px;
  padding: 0 8px 0 4px;
}
.dialog-title button {
  display: flex;
  margin-left: auto;
}
.dialog-title button svg {
  width: 7px;
  height: 7px;
}
.dialog-nav {
  display: flex;
  align-items: center;
  gap: 6px;
  height: 25px;
  padding: 0 6px 0 8px;
}
.history {
  display: flex;
  align-items: center;
  justify-content: space-between;
  width: 58px;
}
.history svg {
  width: 9px;
  height: 9px;
}
.history .small {
  width: 6px;
}
.address, .search {
  display: flex;
  align-items: center;
  height: 16px;
  border: 1px solid #d9d9d9;
}
.address {
  flex: 1;
  padding-left: 3px;
}
.file-icon {
  width: 9px;
  height: 10px;
}
.chev {
  padding: 0 5px;
}
.addr-down {
  width: 8px;
  height: 8px;
  margin-left: auto;
}
.address button {
  display: flex;
  align-items: center;
  justify-content: center;
  width: 14px;
  height: 14px;
  margin-left: 3px;
  border-left: 1px solid #d9d9d9;
}
.address button svg, .search svg {
  width: 8px;
  height: 8px;
}
.search {
  width: 138px;
  padding: 0 5px;
}
.search input {
  flex: 1;
  min-width: 0;
}
.search input::placeholder {
  color: #777;
}
.dialog-tools {
  display: flex;
  align-items: center;
  gap: 20px;
  height: 20px;
  padding: 0 10px;
  background: #f5f6f7;
  border-bottom: 1px solid #e8eaec;
  color: #1e395b;
}
.dialog-tools button {
  display: flex;
  align-items: center;
  gap: 3px;
}
.tri {
  border-width: 3px 2px 0;
}
.view-tools {
  display: flex;
  gap: 14px;
  margin-left: auto;
}
.dialog-tools .view-tools button {
  gap: 7px;
}
.view-tools svg {
  width: 12px;
  height: 10px;
}
.dialog-tools .help {
  justify-content: center;
  width: 11px;
  height: 11px;
  border-radius: 50%;
  background: #0d62b5;
  color: #fff;
  font-weight: bold;
}
.dialog-body {
  display: flex;
  height: 202px;
}
.places {
  width: 94px;
  padding-top: 12px;
  overflow: hidden;
}
.places li {
  display: flex;
  align-items: center;
  gap: 3px;
  height: 16px;
  padding: 0 4px 0 23px;
  white-space: nowrap;
}
.places li svg {
  width: 9px;
  height: 10px;
}
.places li .pin {
  width: 6px;
  height: 6px;
  margin-left: auto;
}
.places .root {
  padding-left: 16px;
}
.places .spaced {
  margin-top: 8px;
}
.places .spaced + .spaced {
  margin-top: 6px;
}
.places .current {
  background: #d9d9d9;
}
.scrollbar {
  display: flex;
  flex-direction: column;
  align-items: center;
  justify-content: space-between;
  width: 10px;
  padding: 2px 0;
  background: #f0f0f0;
}
.scrollbar svg {
  width: 7px;
  height: 8px;
}
.scrollbar .thumb {
  width: 100%;
  height: 146px;
  margin-bottom: auto;
  background: #cdcdcd;
}
.files {
  position: relative;
  display: flex;
  align-items: flex-start;
  gap: 6px;
  padding: 3px 0 0 13px;
}
.file {
  width: 72px;
  min-height: 82px;
  padding: 2px 3px 0;
  text-align: center;
}
.file.selected {
  background: #cce8ff;
  outline: 1px solid #99d1ff;
  outline-offset: -1px;
}
.preview {
  display: flex;
  align-items: center;
  justify-content: center;
  height: 66px;
  border: 1px solid #e3e3e3;
}
.preview svg {
  width: 64px;
  height: 64px;
}
.preview .dwg {
  width: 30px;
  height: 34px;
}
.preview.plain {
  border-color: transparent;
}
.selected .preview {
  border-color: #b4dcf8;
}
.file span {
  display: block;
  white-space: nowrap;
  line-height: 11px;
}
.pointer {
  position: absolute;
  left: 82px;
  top: 86px;
  width: 56px;
  height: 44px;
}
.dialog-footer {
  position: relative;
  padding: 8px 13px 9px;
  background: #f0f0f0;
}
.field-row, .button-row {
  display: flex;
  align-items: center;
  justify-content: flex-end;
}
.combo {
  display: flex;
  align-items: center;
  height: 16px;
  padding: 0 2px;
  border: 1px solid #aaa;
  background: #fff;
}
.combo svg {
  width: 7px;
  height: 8px;
}
.combo input, .combo select {
  flex: 1;
  min-width: 0;
}
.filename {
  width: 230px;
  margin: 0 8px 0 4px;
}
.filetype {
  width: 128px;
  background: #e6e6e6;
}
.button-row {
  gap: 8px;
  margin-top: 4px;
}
.button-row button {
  width: 60px;
  height: 17px;
  border: 1px solid #bbb;
  background: #e1e1e1;
}
.button-row .primary {
  border-color: #5d9dc0;
  background: #e5f1fb;
}
.grip {
  position: absolute;
  right: 1px;
  bottom: 1px;
  width: 6px;
  height: 6px;
}

/* default tray */
.tray {
  display: flex;
  flex-direction: column;
  width: 164px;
  padding-left: 3px;
}
.tray-title {
  display: flex;
  align-items: center;
  height: 14px;
  padding: 0 2px;
  background: linear-gradient(#c6d6e8, #d9e4f0);
}
.tray-title svg {
  width: 5px;
  height: 7px;
  margin-left: auto;
}
.tray-title button {
  width: 7px;
  height: 7px;
  margin-left: 6px;
  background: #d3454b;
  color: #fff;
  line-height: 7px;
}
.tray-body {
  display: flex;
  flex: 1;
}
.panels {
  display: flex;
  flex: 1;
  flex-direction: column;
  min-width: 0;
}
.panel-head {
  display: flex;
  align-items: center;
  height: 13px;
  padding: 0 2px 0 5px;
  border-bottom: 1px solid #aaa;
  background: linear-gradient(#e2e2e2, #c9c9c9);
}
.panel-head::before {
  content: "";
  margin-right: 6px;
  border: 3px solid transparent;
  border-left: 5px solid #111;
  border-right: 0;
}
.panel-head.open::before {
  border: 3px solid transparent;
  border-top: 5px solid #111;
  border-bottom: 0;
  margin-right: 5px;
}
.panel-head button {
  width: 9px;
  height: 9px;
  margin-left: auto;
  border: 1px solid #bbb;
  background: #eee;
  line-height: 7px;
}
.entity {
  height: 99px;
}
.entity-row {
  display: flex;
  align-items: center;
  justify-content: space-between;
  height: 17px;
  padding: 0 4px 0 6px;
  border-bottom: 1px solid #bbb;
}
.entity-row strong {
  font-size: 9px;
}
.plusbox {
  width: 8px;
  height: 9px;
}
.material {
  display: flex;
  align-items: flex-start;
  gap: 2px;
  height: 50px;
  padding: 1px 1px 0;
  border-bottom: 1px solid #bbb;
}
.mat-preview {
  flex: none;
  width: 42px;
  height: 47px;
  border: 1px solid #bbb;
  background: linear-gradient(to top right, #a2b2bd 50%, #fff 50%);
}
.material input {
  flex: 1;
  min-width: 0;
  height: 13px;
  border: 1px solid #ddd;
  border-top-color: #888;
  border-left-color: #888;
  color: #999;
}
.mat-side {
  display: flex;
  flex-direction: column;
  align-items: center;
  justify-content: space-between;
  width: 16px;
  height: 47px;
  padding-top: 2px;
}
.mat-side svg:nth-child(2) {
  width: 11px;
  height: 11px;
}
.mat-default {
  width: 14px;
  height: 14px;
  background: linear-gradient(to top right, #a2b2bd 50%, #fff 50%);
}
.mat-tabs {
  display: flex;
  align-items: center;
  height: 19px;
  padding: 0 2px;
}
.mat-tabs a {
  padding: 0 7px 0 2px;
  border-right: 1px solid #999;
}
.mat-tabs svg {
  width: 10px;
  height: 10px;
  margin-left: auto;
}
.mat-nav {
  display: flex;
  align-items: center;
  gap: 5px;
  height: 17px;
  padding: 0 3px;
}
.mat-nav svg, .scene-tools svg:last-child {
  width: 10px;
  height: 10px;
}
.mat-nav .flip {
  transform: scaleX(-1);
}
.library {
  display: flex;
  align-items: center;
  flex: 1;
  min-width: 0;
  height: 14px;
  padding: 0 3px 0 2px;
  border: 1px solid #888;
  background: #fff;
}
.library select {
  flex: 1;
  min-width: 0;
}
.swatches {
  display: grid;
  grid-template-columns: repeat(4, 34px);
  grid-auto-rows: 34px;
  align-content: start;
  gap: 1px;
  height: 121px;
  margin-top: 1px;
  padding: 1px;
  border-top: 1px solid #aaa;
  background: #fff;
}
.swatch {
  border: 1px solid #bbb;
  overflow: hidden;
}
.grid-glass {
  background: repeating-linear-gradient(45deg, transparent 0 5px, #a5dbe8 5px 6px), repeating-linear-gradient(-45deg, #e4fafd 0 5px, #a5dbe8 5px 6px);
}
.green {
  background: linear-gradient(to bottom right, #3e6205 50%, #9dad82 50%);
}
.blue {
  background: linear-gradient(to bottom right, #6595e8 50%, #b0caf5 50%);
}
.sky {
  background: linear-gradient(to bottom right, transparent 50%, rgba(255, 255, 255, 0.4) 50%), radial-gradient(circle at 30% 75%, #dfe4f4, transparent 45%), radial-gradient(circle at 90% 10%, #c7d2ee, transparent 40%), #5a6ea9;
}
.cyan {
  background: linear-gradient(to bottom right, #09c3ec 50%, #7fe3fb 50%);
}
.ribbed {
  background: linear-gradient(to bottom right, rgba(70, 95, 80, 0.3) 50%, transparent 50%), repeating-linear-gradient(90deg, #829184 0 3px, #bccdc0 3px 5px);
}
.block {
  background: repeating-linear-gradient(90deg, transparent 0 9px, #b5b5b5 9px 11px), repeating-linear-gradient(#686664 0 9px, #b5b5b5 9px 11px);
}
.speckle {
  background: #eee;
}
.grey {
  background: linear-gradient(to bottom right, #808080 50%, #bebebe 50%);
}
.yellow {
  background: linear-gradient(to bottom right, #ff0 50%, #ffff85 50%);
}
.mirror-a {
  background: linear-gradient(#eee, #858585);
}
.mirror-b {
  background: linear-gradient(to right, #ccc, #fff);
}
.scene-tools {
  display: flex;
  align-items: center;
  justify-content: flex-end;
  gap: 6px;
  height: 17px;
  padding-right: 3px;
  border-bottom: 1px solid #bbb;
}
.scene-list {
  flex: 1;
  background: #fff;
}
.tray-scroll {
  width: 12px;
}
.tray-scroll .thumb {
  height: 12px;
  margin-top: 4px;
}

/* site badge */
.brand {
  position: absolute;
  right: 39px;
  bottom: 2px;
  display: flex;
  align-items: center;
  gap: 8px;
  width: 195px;
  height: 99px;
  padding-left: 7px;
  background: #212f58;
  color: #e8e8e8;
}
.brand > svg {
  width: 46px;
  height: 60px;
}
.brand-text {
  display: flex;
  flex-direction: column;
  padding-bottom: 4px;
}
.brand-cn {
  font: bold 30px/34px "Noto Sans CJK SC", sans-serif;
}
.brand-en {
  font: 23px/28px "DejaVu Sans", sans-serif;
}

/* status bar */
.statusbar {
  display: flex;
  align-items: center;
  gap: 8px;
  height: 17px;
  padding: 0 3px;
  font-size: 9px;
}
.statusbar svg {
  width: 11px;
  height: 11px;
}
.statusbar p {
  margin-right: auto;
  padding-left: 4px;
}
.statusbar label {
  padding-left: 5px;
  border-left: 1px solid #bbb;
}
.statusbar input {
  width: 136px;
  height: 13px;
  margin-left: -4px;
  border: 1px solid #ccc;
}
```
